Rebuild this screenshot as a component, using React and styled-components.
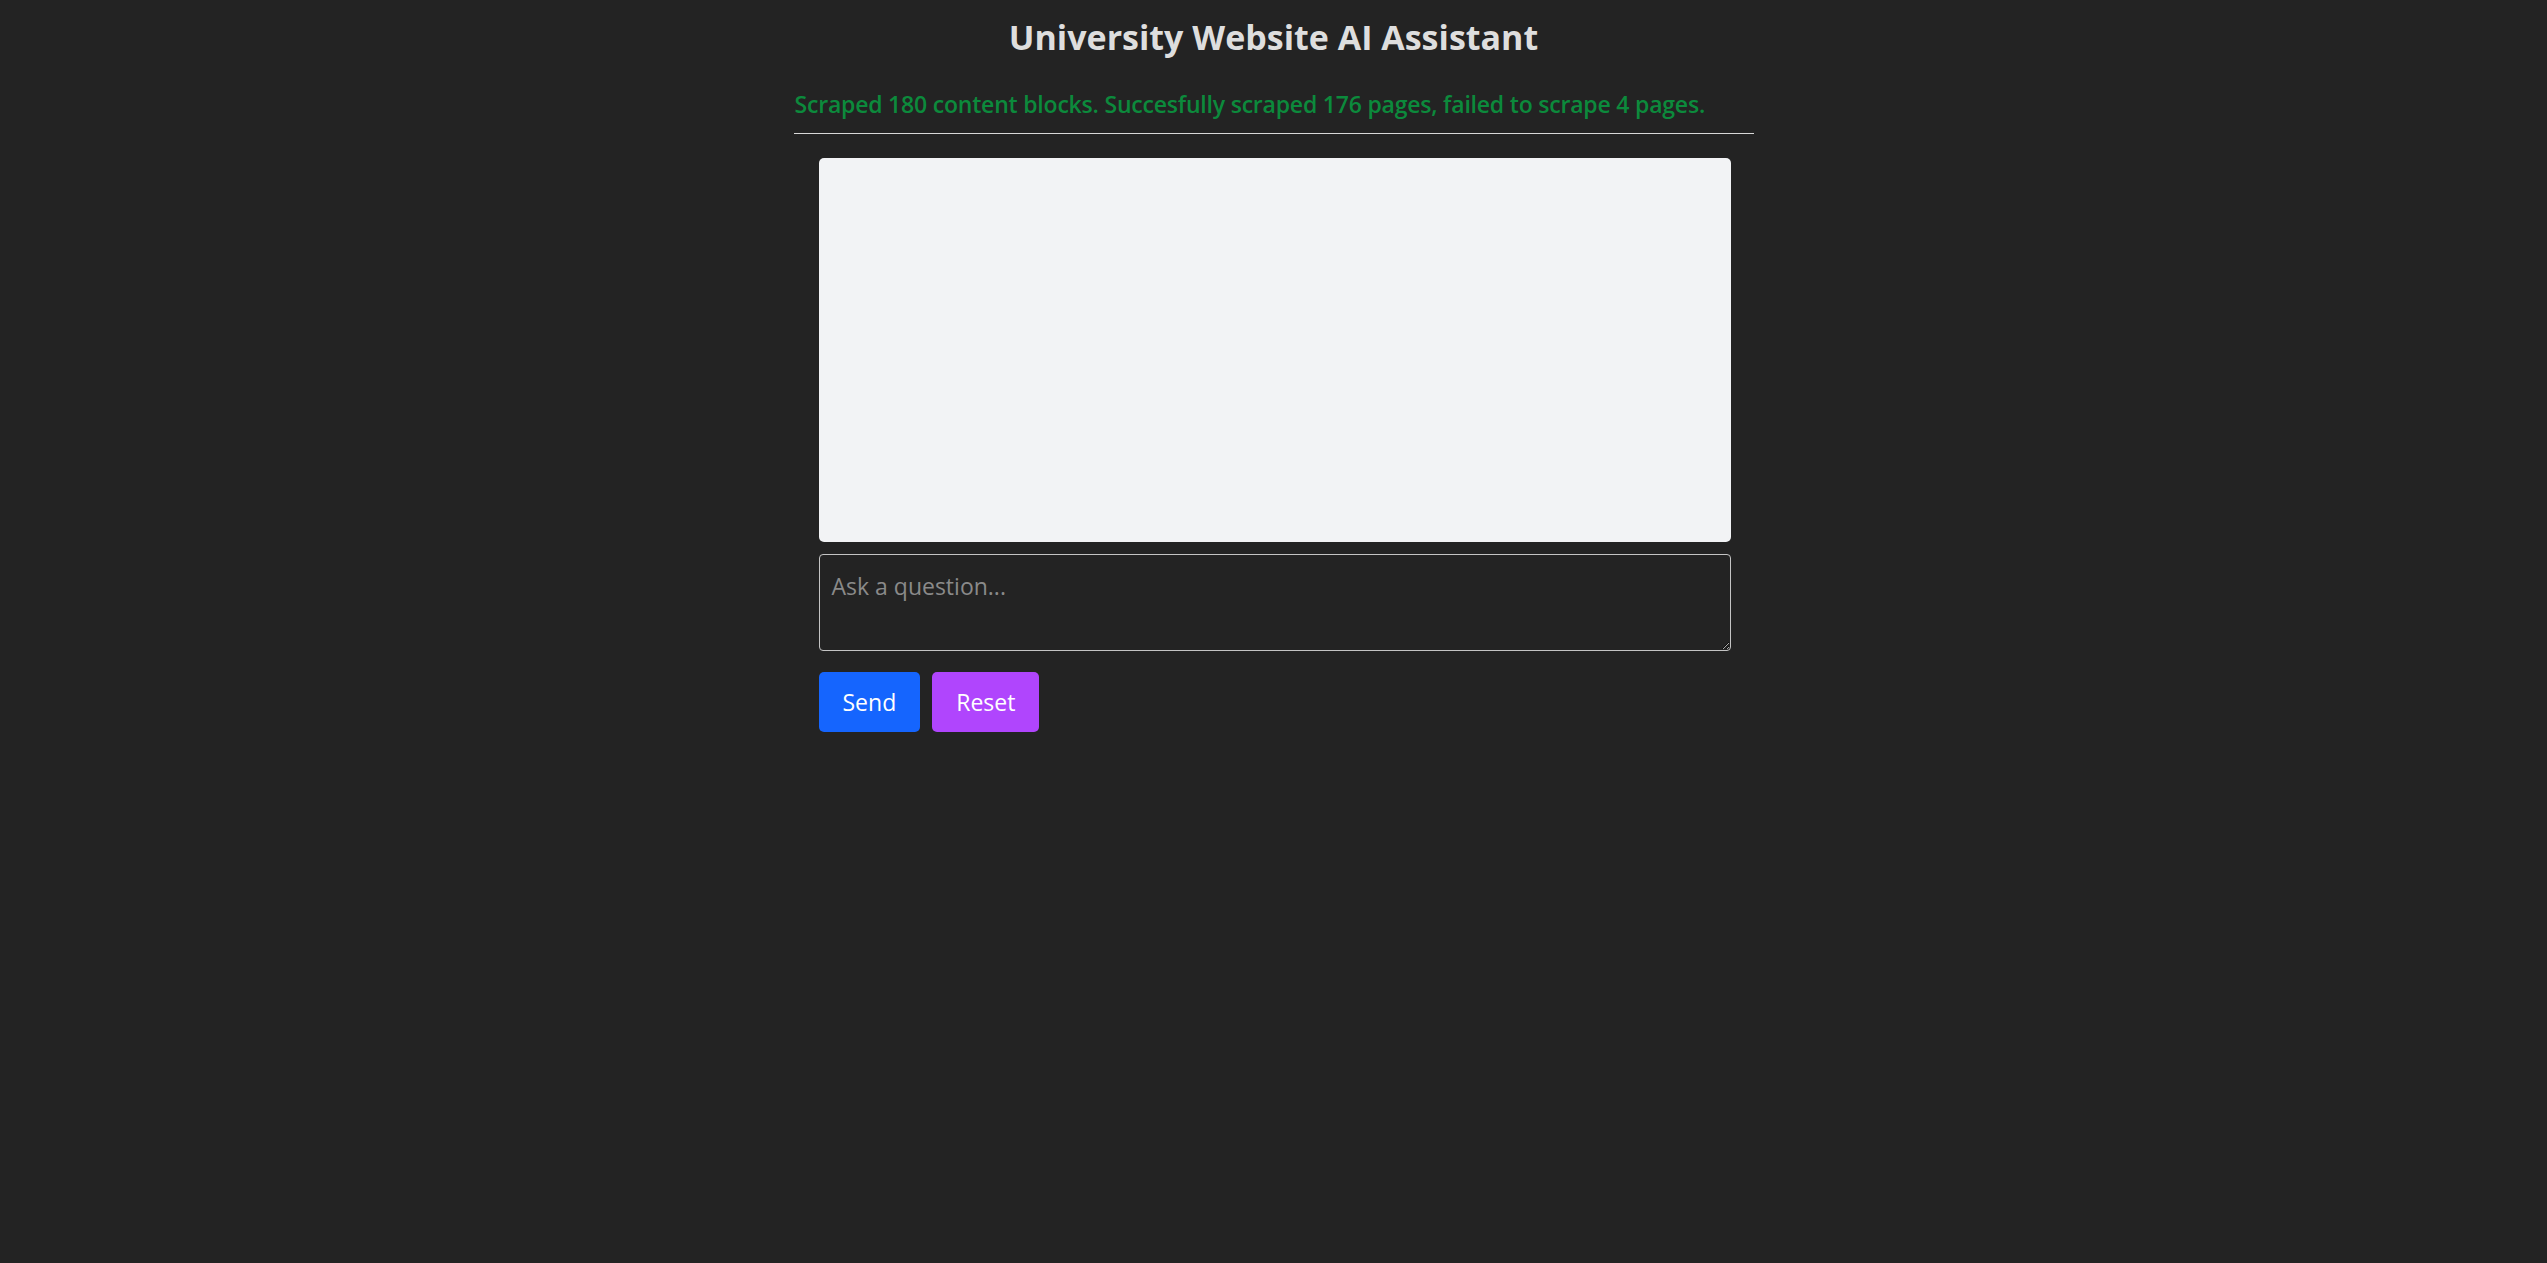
import styled, { createGlobalStyle } from 'styled-components';

const GlobalStyle = createGlobalStyle`
  html, body {
    margin: 0;
    padding: 0;
    background: #232323;
    min-height: 100%;
  }
  body {
    font-family: "Open Sans", "Noto Sans", "Liberation Sans", sans-serif;
    color: #dcdcdc;
  }
`;

function App() {
    return (
        <>
            <GlobalStyle />
            <Page>
                <Title>University Website AI Assistant</Title>
                <Status>Scraped 180 content blocks. Succesfully scraped 176 pages, failed to scrape 4 pages.</Status>
                <Divider />
                <ChatArea>
                    <ChatLog />
                    <QuestionInput placeholder="Ask a question..." />
                    <ButtonRow>
                        <ActionButton $bg="#1565fe">Send</ActionButton>
                        <ActionButton $bg="#b045fd">Reset</ActionButton>
                    </ButtonRow>
                </ChatArea>
            </Page>
        </>
    );
}

export default App;

const Page = styled.main`
    width: 960px;
    margin: 0 auto;
    min-height: 1263px;
    box-sizing: border-box;
    padding-top: 14px;
`;

const Title = styled.h1`
    margin: 0;
    text-align: center;
    font-size: 34px;
    line-height: 46px;
    font-weight: 700;
    color: #dedede;
`;

const Status = styled.p`
    margin: 29px 0 0 1px;
    font-size: 23px;
    line-height: 30px;
    font-weight: 600;
    color: #0c8a3c;
    letter-spacing: -0.2px;
`;

const Divider = styled.hr`
    margin: 14px 0 0;
    border: none;
    border-top: 1px solid #d8d8d8;
`;

const ChatArea = styled.section`
    display: flex;
    flex-direction: column;
    gap: 12px;
    margin: 24px 23px 0 25px;
`;

const ChatLog = styled.div`
    height: 384px;
    background: #f2f3f5;
    border-radius: 5px;
`;

const QuestionInput = styled.textarea`
    height: 97px;
    box-sizing: border-box;
    background: transparent;
    border: 1px solid #c4c4c4;
    border-radius: 4px;
    padding: 15px 12px 8px;
    font-family: inherit;
    font-size: 23px;
    color: #dcdcdc;
    resize: vertical;
    outline: none;

    &::placeholder {
        color: #8a8a8a;
    }
`;

const ButtonRow = styled.div`
    display: flex;
    gap: 12px;
    margin-top: 9px;
`;

const ActionButton = styled.button`
    height: 60px;
    padding: 0 24px;
    border: none;
    border-radius: 5px;
    background: ${({ $bg }) => $bg};
    color: #fff;
    font-family: inherit;
    font-size: 23px;
    cursor: pointer;
`;
